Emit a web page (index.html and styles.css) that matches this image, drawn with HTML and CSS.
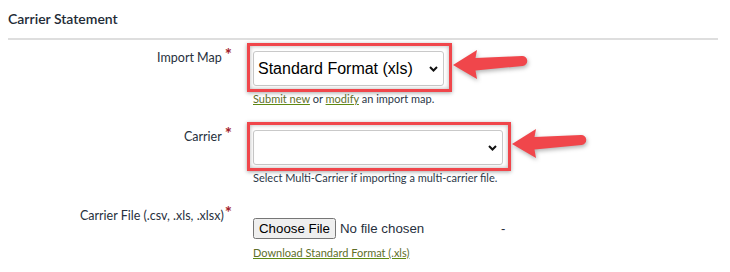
FILE: index.html
```html
<!DOCTYPE html>
<html lang="en">
<head>
    <meta charset="UTF-8">
    <title>Carrier Statement</title>
    <link rel="stylesheet" href="styles.css">
</head>
<body>
    <div class="page">
        <h2 class="section-title">Carrier Statement</h2>

        <div class="row">
            <label class="label" for="import-map">Import Map<span class="req">*</span></label>
            <div class="field">
                <div class="callout callout-map">
                    <select id="import-map" class="select">
                        <option>Standard Format (xls)</option>
                    </select>
                    <svg class="chevron" width="9" height="6" viewBox="0 0 9 6"><path d="M1 1l3.5 3.5L8 1" fill="none" stroke="#111" stroke-width="2"/></svg>
                    <svg class="arrow" width="78" height="34" viewBox="0 0 78 34"><path d="M1 16L25 1L23.5 9L70 7A5 5 0 0 1 70.5 17L23.5 21.5L25 30Z" fill="#f0464b"/></svg>
                </div>
                <p class="help"><a href="#">Submit new</a> or <a href="#">modify</a> an import map.</p>
            </div>
        </div>

        <div class="row">
            <label class="label" for="carrier">Carrier<span class="req">*</span></label>
            <div class="field">
                <div class="callout callout-carrier">
                    <select id="carrier" class="select">
                        <option></option>
                    </select>
                    <svg class="chevron" width="9" height="6" viewBox="0 0 9 6"><path d="M1 1l3.5 3.5L8 1" fill="none" stroke="#111" stroke-width="2"/></svg>
                    <svg class="arrow" width="78" height="34" viewBox="0 0 78 34"><path d="M1 16L25 1L23.5 9L70 7A5 5 0 0 1 70.5 17L23.5 21.5L25 30Z" fill="#f0464b"/></svg>
                </div>
                <p class="help">Select Multi-Carrier if importing a multi-carrier file.</p>
            </div>
        </div>

        <div class="row row-file">
            <label class="label" for="carrier-file">Carrier File (.csv, .xls, .xlsx)<span class="req">*</span></label>
            <div class="field">
                <div class="file-line">
                    <input type="file" id="carrier-file" class="file-input">
                    <span class="dash">-</span>
                </div>
                <p class="help"><a href="#">Download Standard Format (.xls)</a></p>
            </div>
        </div>
    </div>
</body>
</html>
```

FILE: styles.css
```css
body {
    margin: 0;
    background: #fff;
    font-family: Lato, "Noto Sans", sans-serif;
    color: #27303d;
}
.page {
    padding: 0 12px 0 8px;
}
.section-title {
    margin: 0;
    padding: 10px 0 11px;
    font-size: 14px;
    line-height: 17px;
    font-weight: 600;
    color: #222b36;
    border-bottom: 2px solid #dedede;
}
.row {
    display: grid;
    grid-template-columns: 224px 1fr;
    column-gap: 21px;
    margin-top: 8px;
}
.row + .row {
    margin-top: 20px;
}
.label {
    text-align: right;
    font-size: 12.5px;
    line-height: 20px;
    color: #27303d;
}
.req {
    color: #a3212b;
    font-size: 17px;
    font-weight: bold;
    vertical-align: top;
    position: relative;
    top: -3px;
    margin-left: 3px;
}
.row-file .req {
    margin-left: 1px;
}
.field {
    padding-top: 3px;
}
.callout {
    position: relative;
    width: 191px;
}
.callout-carrier {
    width: 250px;
}
/* red annotation frame */
.callout::before {
    content: "";
    position: absolute;
    top: -8px;
    left: -6px;
    right: -8px;
    bottom: -6px;
    border: 3px solid #f0464b;
    box-shadow: 0 1px 4px rgba(0,0,0,0.35), inset 0 0 4px rgba(0,0,0,0.3);
    pointer-events: none;
}
.select {
    display: block;
    width: 100%;
    height: 35px;
    margin: 0;
    padding: 0 18px 0 4px;
    border: 1px solid #c9c9c9;
    border-radius: 3px;
    background: #fff;
    font-family: "Liberation Sans", Arial, sans-serif;
    font-size: 16px;
    color: #000;
    -webkit-appearance: none;
    appearance: none;
}
.chevron {
    position: absolute;
    right: 6px;
    top: 15px;
}
.arrow {
    position: absolute;
    left: calc(100% + 8px);
    top: -2px;
    filter: drop-shadow(1px 2px 2px rgba(0,0,0,0.3));
}
.help {
    margin: 5px 0 0;
    font-size: 11px;
    line-height: 16px;
    color: #2c3848;
}
.help a {
    color: #5e6f2a;
    text-decoration: underline;
    text-decoration-color: #5f8a12;
}
.row-file .field {
    padding-top: 12px;
}
.file-line {
    display: flex;
    align-items: center;
}
.file-input {
    width: 244px;
    font-family: "Liberation Sans", Arial, sans-serif;
    font-size: 13.3px;
}
.file-input::file-selector-button {
    padding: 1px 4px;
    margin-right: 4px;
}
.dash {
    font-family: "Liberation Sans", Arial, sans-serif;
    font-size: 13px;
    margin-left: 4px;
}
.row-file .help {
    margin-top: 6px;
}
```
